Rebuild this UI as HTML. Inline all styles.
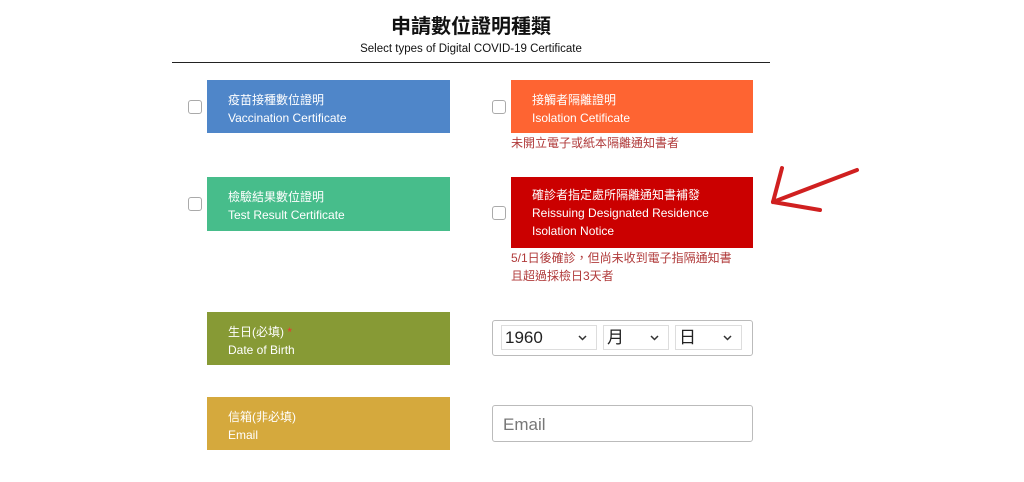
<!DOCTYPE html>
<html><head><meta charset="utf-8"><style>
body{margin:0;width:1024px;height:482px;background:#fff;position:relative;overflow:hidden;font-family:"Liberation Sans","Noto Sans CJK TC",sans-serif}
.a{position:absolute}
.box{position:absolute;color:#fff;font-size:12px;line-height:18px;box-sizing:border-box;padding-left:21px}
.cb{position:absolute;width:12px;height:12px;border:1px solid #aaa;border-radius:3px;background:#fff}
.note{position:absolute;color:#b03a3a;font-size:12px;line-height:18px}
.sel{position:absolute;top:325px;height:25px;border:1px solid #ddd;box-sizing:border-box;font-size:17px;line-height:23px;padding-left:3px;color:#222}
.sel svg{position:absolute;right:9px;top:9px}
</style></head><body>
<div class="a" style="left:172px;width:598px;top:10px;text-align:center;font-size:20px;font-weight:bold;color:#111">申請數位證明種類</div>
<div class="a" style="left:172px;width:598px;top:42px;text-align:center;font-size:11.5px;line-height:14px;color:#111">Select types of Digital COVID-19 Certificate</div>
<div class="a" style="left:172px;width:598px;top:62px;height:1px;background:#222"></div>

<div class="cb" style="left:188px;top:100px"></div>
<div class="box" style="left:207px;top:80px;width:243px;height:53px;background:#4f86c9;padding-top:11px">疫苗接種數位證明<br>Vaccination Certificate</div>
<div class="cb" style="left:492px;top:100px"></div>
<div class="box" style="left:511px;top:80px;width:242px;height:53px;background:#fe6432;padding-top:11px">接觸者隔離證明<br>Isolation Cetificate</div>
<div class="note" style="left:511px;top:134px">未開立電子或紙本隔離通知書者</div>

<div class="cb" style="left:188px;top:197px"></div>
<div class="box" style="left:207px;top:177px;width:243px;height:54px;background:#47bd8b;padding-top:11px">檢驗結果數位證明<br>Test Result Certificate</div>
<div class="cb" style="left:492px;top:206px"></div>
<div class="box" style="left:511px;top:177px;width:242px;height:71px;background:#cb0000;padding-top:9px">確診者指定處所隔離通知書補發<br>Reissuing Designated Residence<br>Isolation Notice</div>
<div class="note" style="left:511px;top:249px">5/1日後確診，但尚未收到電子指隔通知書<br>且超過採檢日3天者</div>

<svg class="a" style="left:765px;top:160px" width="100" height="60"><g stroke="#d02020" stroke-width="4" stroke-linecap="round" fill="none"><path d="M92 10 L8 42"/><path d="M8 42 L17 8"/><path d="M8 42 L55 50"/></g></svg>

<div class="box" style="left:207px;top:312px;width:243px;height:53px;background:#879a35;padding-top:11px">生日(必填) <span style="color:#e33">*</span><br>Date of Birth</div>
<div class="a" style="left:492px;top:320px;width:261px;height:36px;border:1px solid #bbb;border-radius:3px;box-sizing:border-box"></div>
<div class="sel" style="left:501px;width:96px">1960<svg width="9" height="6"><path d="M1 1L4.5 4.5L8 1" stroke="#333" stroke-width="1.5" fill="none"/></svg></div>
<div class="sel" style="left:603px;width:66px">月<svg width="9" height="6"><path d="M1 1L4.5 4.5L8 1" stroke="#333" stroke-width="1.5" fill="none"/></svg></div>
<div class="sel" style="left:675px;width:67px">日<svg width="9" height="6"><path d="M1 1L4.5 4.5L8 1" stroke="#333" stroke-width="1.5" fill="none"/></svg></div>

<div class="box" style="left:207px;top:397px;width:243px;height:53px;background:#d5a93d;padding-top:11px">信箱(非必填)<br>Email</div>
<div class="a" style="left:492px;top:405px;width:261px;height:37px;border:1px solid #bbb;border-radius:3px;box-sizing:border-box;font-size:17px;color:#777;padding:9px 0 0 10px">Email</div>
</body></html>
